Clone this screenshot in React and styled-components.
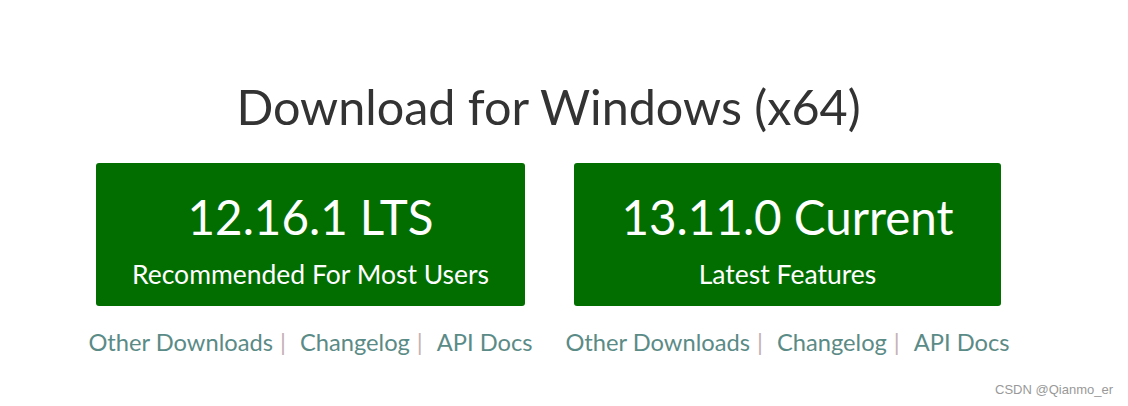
import React from 'react';
import styled, { createGlobalStyle } from 'styled-components';

const GlobalStyle = createGlobalStyle`
    body {
        margin: 0;
        background: #fff;
        font-family: Lato, "Open Sans", sans-serif;
    }
`

const Page = styled.div`
    position: relative;
    width: 1128px;
    height: 406px;
    box-sizing: border-box;
    display: flex;
    flex-direction: column;
    align-items: center;
    padding: 76px 31px 0 0;
`
const Title = styled.h1`
    margin: 0;
    font-size: 48.5px;
    font-weight: 400;
    line-height: 60px;
    color: #333;
`
const Row = styled.div`
    display: flex;
    gap: 49px;
    margin-top: 27px;
`
const Column = styled.div`
    width: ${props => props.width}px;
    display: flex;
    flex-direction: column;
    align-items: center;
`
const Button = styled.a`
    width: 100%;
    height: 143px;
    box-sizing: border-box;
    display: flex;
    flex-direction: column;
    align-items: center;
    background: #026e00;
    border-radius: 3px;
    color: #fff;
    text-decoration: none;
    padding-top: 24px;
`
const Version = styled.span`
    font-size: 47.5px;
    line-height: 60px;
`
const Label = styled.span`
    margin-top: 12px;
    font-size: 26.5px;
    line-height: 30px;
`
const Links = styled.div`
    display: flex;
    flex-shrink: 0;
    align-items: center;
    white-space: nowrap;
    margin-top: 21px;
    font-size: 23.7px;
    line-height: 30px;
    color: #5b8b86;
`
const Link = styled.a`
    color: inherit;
    text-decoration: none;
`
const Sep = styled.span`
    color: #c4b0b4;
    margin: 0 14px 0 7px;
`
const Watermark = styled.div`
    position: absolute;
    right: 15px;
    bottom: 9px;
    font-family: "Liberation Sans", Arial, sans-serif;
    font-size: 13px;
    color: #999;
`

const releases = [
    { version: '12.16.1 LTS', label: 'Recommended For Most Users', width: 429 },
    { version: '13.11.0 Current', label: 'Latest Features', width: 427 },
]

const App = () => {
    return (
        <Page>
            <GlobalStyle />
            <Title>Download for Windows (x64)</Title>
            <Row>
                {releases.map((r) => (
                    <Column key={r.version} width={r.width}>
                        <Button href="#">
                            <Version>{r.version}</Version>
                            <Label>{r.label}</Label>
                        </Button>
                        <Links>
                            <Link href="#">Other Downloads</Link>
                            <Sep>|</Sep>
                            <Link href="#">Changelog</Link>
                            <Sep>|</Sep>
                            <Link href="#">API Docs</Link>
                        </Links>
                    </Column>
                ))}
            </Row>
            <Watermark>CSDN @Qianmo_er</Watermark>
        </Page>
    )
}

export default App
